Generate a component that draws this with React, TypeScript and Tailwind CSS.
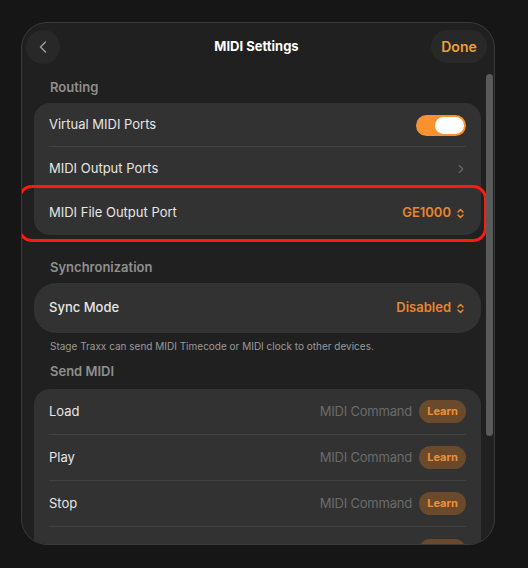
import { ChevronLeft, ChevronRight } from 'lucide-react'

const sendRows = ['Load', 'Play', 'Stop', 'Playback Ends']

const SectionLabel = ({ children, className = '' }: { children: string; className?: string }) => (
  <p className={`px-[28px] text-[13px] font-semibold leading-4 text-[#8f8f8f] ${className}`}>{children}</p>
)

const UpDown = () => (
  <svg width="7" height="11" viewBox="0 0 7 11" fill="none" className="ml-[6px]">
    <path d="M1 4l2.5-2.5L6 4M1 7l2.5 2.5L6 7" stroke="#e8862e" strokeWidth="1.5" strokeLinecap="round" strokeLinejoin="round" />
  </svg>
)

const Toggle = () => (
  <div className="flex h-[21px] w-[50px] items-center justify-end rounded-full bg-[#f8922e] px-[2px]">
    <div className="h-[17px] w-[29px] rounded-full bg-white" />
  </div>
)

export default function App() {
  return (
    <div
      className="h-[568px] w-[528px] bg-[#161616] pl-[21px] pt-[22px]"
      style={{ fontFamily: 'Inter, "Noto Sans", sans-serif' }}
    >
      <div className="relative flex h-[523px] w-[474px] flex-col overflow-hidden rounded-[26px] border border-[#3a3a3a] bg-[#202020]">
        {/* header */}
        <div className="grid h-[47px] shrink-0 grid-cols-[1fr_auto_1fr] items-center pl-[4px] pr-[7px]">
          <button className="flex h-[34px] w-[34px] items-center justify-center rounded-full bg-[#282828] text-[#9a9a9a]">
            <ChevronLeft size={20} strokeWidth={1.75} />
          </button>
          <h1 className="text-[13px] font-bold text-white">MIDI Settings</h1>
          <button className="flex h-[33px] w-[56px] items-center justify-center justify-self-end rounded-full bg-[#282828] text-[14px] font-semibold text-[#f0a030]">
            Done
          </button>
        </div>

        <div className="flex flex-col">
          <SectionLabel className="mt-[9px]">Routing</SectionLabel>
          <div className="mx-[12px] mt-[8px] w-[447px] rounded-[16px] bg-[#323232]">
            <div className="mx-[15px] flex h-[44px] items-center justify-between border-b border-[#414141] pt-[1px] text-[13px] text-[#e6e6e6]">
              <span>Virtual MIDI Ports</span>
              <Toggle />
            </div>
            <div className="mx-[15px] flex h-[44px] items-center justify-between text-[13px] text-[#e6e6e6]">
              <span>MIDI Output Ports</span>
              <ChevronRight size={14} strokeWidth={2} className="-mr-[2px] text-[#666]" />
            </div>
            <div className="relative flex h-[44px] items-center justify-between px-[15px] text-[13px] text-[#e6e6e6]">
              <span>MIDI File Output Port</span>
              <span className="flex items-center pr-[2px] font-semibold text-[#e8862e]">
                GE1000
                <UpDown />
              </span>
              {/* highlight ring */}
              <div className="pointer-events-none absolute -bottom-[7px] -left-[16px] -right-[6px] -top-[6px] rounded-[14px] border-[3px] border-[#ff1a0d]" />
            </div>
          </div>

          <SectionLabel className="mt-[24px]">Synchronization</SectionLabel>
          <div className="mx-[12px] mt-[8px] flex h-[50px] w-[447px] items-center justify-between rounded-[22px] bg-[#323232] px-[15px] text-[13px] text-[#e6e6e6]">
            <span className="font-medium">Sync Mode</span>
            <span className="flex items-center pr-[2px] font-semibold text-[#e8862e]">
              Disabled
              <UpDown />
            </span>
          </div>
          <p className="mt-[6px] px-[28px] text-[10px] leading-[14px] text-[#9a9a9a]">
            Stage Traxx can send MIDI Timecode or MIDI clock to other devices.
          </p>

          <SectionLabel className="mt-[10px]">Send MIDI</SectionLabel>
          <div className="mx-[12px] mt-[10px] w-[447px] rounded-[16px] bg-[#323232]">
            {sendRows.map((label, i) => (
              <div
                key={label}
                className={`mx-[15px] flex h-[46px] items-center justify-between text-[13px] ${
                  i < sendRows.length - 1 ? 'border-b border-[#414141]' : ''
                }`}
              >
                <span className="text-[#e6e6e6]">{label}</span>
                <div className="flex items-center gap-[7px]">
                  <span className="tracking-[-0.2px] text-[#6b6b6b]">MIDI Command</span>
                  <button className="flex h-[23px] w-[47px] items-center justify-center rounded-full bg-[#6b4a2c] text-[11px] font-bold text-[#f08f36]">
                    Learn
                  </button>
                </div>
              </div>
            ))}
          </div>
        </div>

        {/* scroll indicator */}
        <div className="absolute right-[1px] top-[51px] h-[362px] w-[7px] rounded-full bg-[#5a5a5a]" />
      </div>
    </div>
  )
}
